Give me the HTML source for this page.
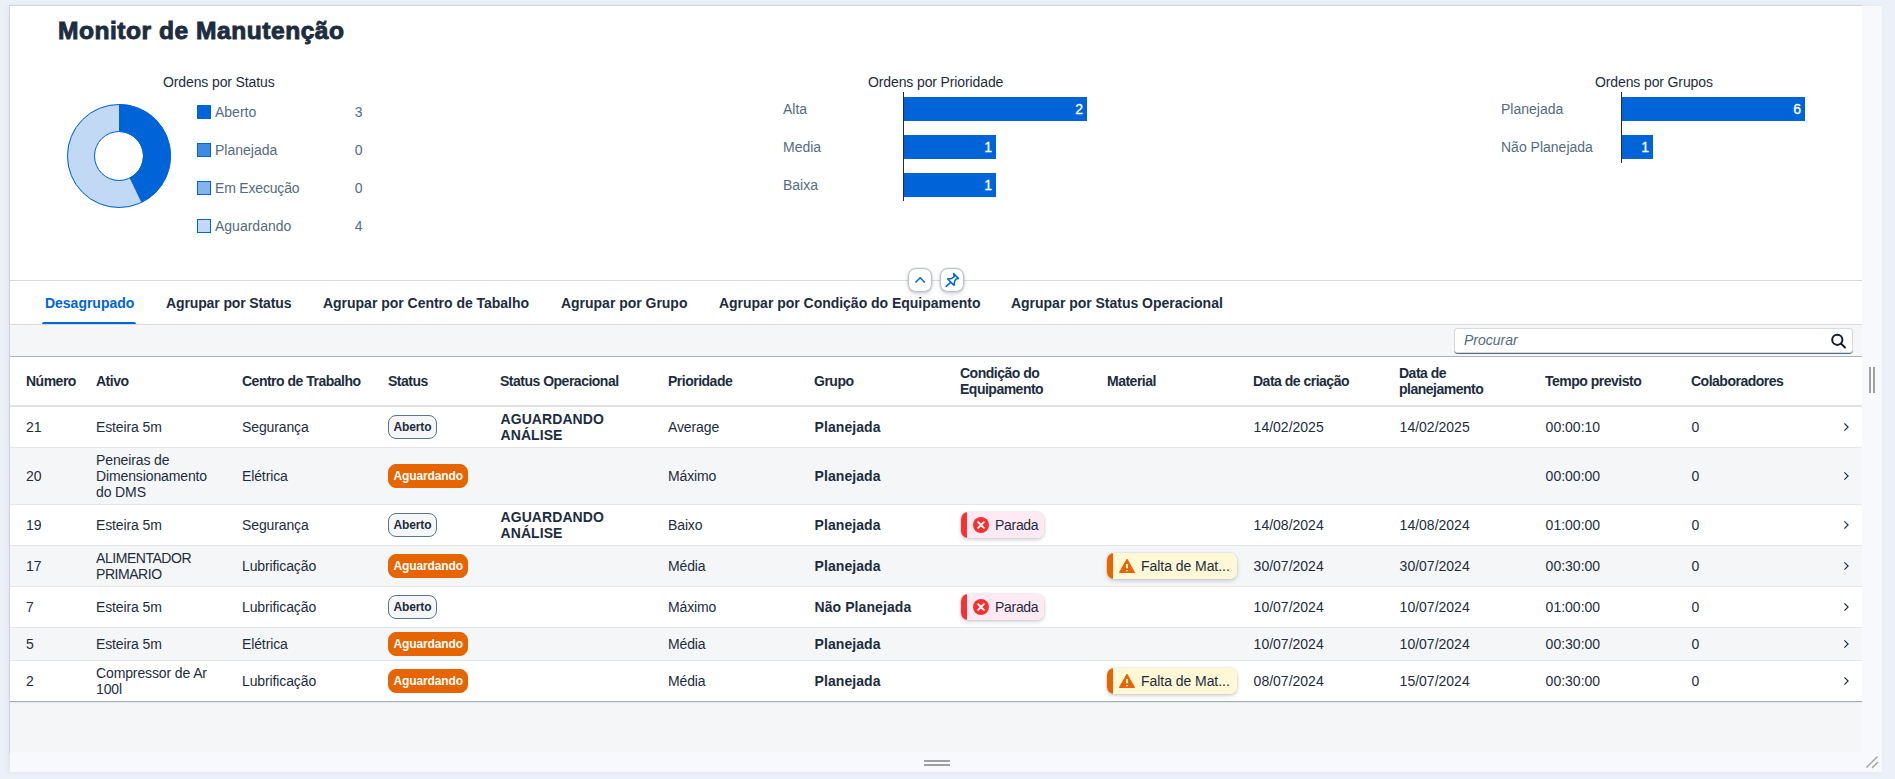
<!DOCTYPE html>
<html lang="pt-BR">
<head>
<meta charset="utf-8">
<title>Monitor de Manutenção</title>
<style>
*{box-sizing:border-box;margin:0;padding:0}
html,body{width:1895px;height:779px;overflow:hidden}
body{position:relative;background:#ecf0f8;font-family:"Liberation Sans",Arial,sans-serif;font-size:14px;color:#1d2d3e}
.abs{position:absolute}
#frame{left:10px;top:6px;width:1872px;height:766px;background:#f8f9fd;box-shadow:-2px 0 5px rgba(110,120,150,.10)}
#edgeT{left:9px;top:5px;width:1853px;height:1px;background:rgba(90,100,120,.16)}
#edgeL{left:9px;top:5px;width:1px;height:748px;background:rgba(90,100,120,.13)}
#page{left:10px;top:6px;width:1852px;height:746px;background:#fff;overflow:hidden}
#below{left:10px;top:702px;width:1852px;height:50px;background:#f5f6f7;border-top:1px solid #e4e7ea}
h1{position:absolute;left:58px;top:16px;font-size:23.5px;line-height:30px;font-weight:bold;color:#1d2d3e;white-space:nowrap;letter-spacing:.5px;-webkit-text-stroke:.9px #1d2d3e;transform-origin:0 50%;transform:scaleX(1.045)}
.ctitle{position:absolute;font-size:14px;line-height:16px;color:#1d2d3e;white-space:nowrap;letter-spacing:-.12px}
.lbl{position:absolute;font-size:14px;line-height:16px;color:#556b82;white-space:nowrap}
.bar{position:absolute;background:#0064d9;color:#fff;font-size:14px;line-height:24px;height:24px;text-align:right;padding-right:4px;-webkit-text-stroke:.3px #fff}
.axis{position:absolute;width:1px;background:#1d2d3e}
.sq{position:absolute;width:14px;height:14px;border:1px solid #0064d9}
/* header bottom line + buttons */
#hline{left:10px;top:280px;width:1852px;height:1px;background:#d9d9d9}
.hbtn{position:absolute;top:268px;width:24px;height:24px;border:1px solid #bcc3ca;border-radius:8px;background:#fff;box-shadow:0 0 2px rgba(34,53,72,.2),0 2px 4px rgba(34,53,72,.2)}
.hbtn svg{position:absolute;left:0;top:0}
/* tabs */
.tab{position:absolute;top:294px;font-size:14px;line-height:18px;font-weight:bold;color:#1d2d3e;white-space:nowrap;letter-spacing:-.02px}
.tab.sel{color:#0064d9}
#tabul{left:42px;top:322px;width:94px;height:3px;background:#0064d9;border-radius:2px 2px 0 0}
#tabline{left:10px;top:324px;width:1852px;height:1px;background:#d9d9d9}
/* toolbar */
#toolbar{left:10px;top:325px;width:1852px;height:31px;background:#f5f6f7}
#tbline{left:10px;top:356px;width:1852px;height:1px;background:#a8b3bd}
#search{left:1454px;top:328px;width:399px;height:26px;background:#fff;border-radius:4px;box-shadow:inset 0 0 0 1px rgba(85,107,129,.25);border-bottom:1px solid #556b81}
#search span{position:absolute;left:10px;top:4px;font-style:italic;font-size:14px;line-height:16px;color:#556b82}
/* table */
table{position:absolute;left:10px;top:357px;width:1852px;border-collapse:separate;border-spacing:0;table-layout:fixed}
th{height:50px;text-align:left;vertical-align:middle;font-weight:bold;font-size:14px;line-height:16px;padding:0 8px;color:#1d2d3e;border-bottom:2px solid #e3e3e3;letter-spacing:-.5px}
td{vertical-align:middle;font-size:14px;line-height:16px;padding:0 8px;color:#1d2d3e;letter-spacing:-.12px;border-bottom:1px solid #e5e5e5}
tr.alt td{background:#f5f6f7}
tr.last td{border-bottom:1px solid #a3afba}
th:first-child,td:first-child{padding-left:16px}
.b{font-weight:bold}
td.b{letter-spacing:.08px;padding-left:8.5px}
td.n{letter-spacing:0;padding-left:8.6px}
td.up{letter-spacing:-.45px}
.nav svg{display:block;margin:0 auto}
.badge{display:inline-block;height:24px;line-height:22px;border-radius:8px;font-size:12px;font-weight:bold;padding:0 4.5px;letter-spacing:-.12px;vertical-align:middle;white-space:nowrap}
.badge.open{border:1px solid #5b738b;background:#f5f6f7;color:#1d2d3e}
.badge.wait{border:1px solid #e76500;background:#e76500;color:#fff}
.pill{display:inline-block;position:relative;height:26px;line-height:26px;border-radius:7px;font-size:14px;white-space:nowrap;vertical-align:middle;overflow:hidden;box-shadow:0 0 2px rgba(34,53,72,.2),0 2px 4px rgba(34,53,72,.2)}
.pill.err{width:83px;margin-left:1px;background:linear-gradient(90deg,#f53232 6px,#ffeaf4 6px);padding-left:34px;letter-spacing:-.3px}
.pill.warn{width:130px;background:linear-gradient(90deg,#e76500 6px,#fff8d6 6px);padding-left:34px;letter-spacing:-.05px}
.pill svg{position:absolute;top:5px}
.nav{text-align:center}
</style>
</head>
<body>
<div id="frame" class="abs"></div>
<div id="edgeT" class="abs"></div>
<div id="edgeL" class="abs"></div>
<div id="page" class="abs"></div>
<div id="below" class="abs"></div>

<h1>Monitor de Manutenção</h1>

<!-- chart 1: donut -->
<div class="ctitle" style="left:163px;top:74px">Ordens por Status</div>
<svg class="abs" style="left:64px;top:101px" width="110" height="110" viewBox="0 0 110 110">
  <circle cx="55" cy="55" r="38" fill="none" stroke="#c2d9f6" stroke-width="28"/>
  <path d="M55 3 A52 52 0 0 1 77.56 101.85 L65.41 76.62 A24 24 0 0 0 55 31 Z" fill="#0064d9"/>
  <circle cx="55" cy="55" r="51.5" fill="none" stroke="#0064d9" stroke-width="1"/>
  <circle cx="55" cy="55" r="24.5" fill="none" stroke="#0064d9" stroke-width="1"/>
</svg>
<div class="sq" style="left:197px;top:105px;background:#0064d9"></div>
<div class="sq" style="left:197px;top:143px;background:#3f8be3"></div>
<div class="sq" style="left:197px;top:181px;background:#85b4ed"></div>
<div class="sq" style="left:197px;top:219px;background:#c2d9f6"></div>
<div class="lbl" style="left:215px;top:104px">Aberto</div>
<div class="lbl" style="left:215px;top:142px">Planejada</div>
<div class="lbl" style="left:215px;top:180px;letter-spacing:-.18px">Em Execução</div>
<div class="lbl" style="left:215px;top:218px">Aguardando</div>
<div class="lbl" style="left:354.7px;top:104px">3</div>
<div class="lbl" style="left:354.7px;top:142px">0</div>
<div class="lbl" style="left:354.7px;top:180px">0</div>
<div class="lbl" style="left:354.7px;top:218px">4</div>

<!-- chart 2: priority -->
<div class="ctitle" style="left:868px;top:74px">Ordens por Prioridade</div>
<div class="lbl" style="left:783px;top:101px">Alta</div>
<div class="lbl" style="left:783px;top:139px">Media</div>
<div class="lbl" style="left:783px;top:177px">Baixa</div>
<div class="axis" style="left:903px;top:92px;height:109px"></div>
<div class="bar" style="left:904px;top:97px;width:183px">2</div>
<div class="bar" style="left:904px;top:135px;width:92px">1</div>
<div class="bar" style="left:904px;top:173px;width:92px">1</div>

<!-- chart 3: groups -->
<div class="ctitle" style="left:1595px;top:74px">Ordens por Grupos</div>
<div class="lbl" style="left:1501px;top:101px">Planejada</div>
<div class="lbl" style="left:1501px;top:139px">Não Planejada</div>
<div class="axis" style="left:1621px;top:92px;height:71px"></div>
<div class="bar" style="left:1622px;top:97px;width:183px">6</div>
<div class="bar" style="left:1622px;top:135px;width:31px">1</div>

<!-- header line + buttons -->
<div id="hline" class="abs"></div>
<div class="hbtn" style="left:908px"><svg width="22" height="22" viewBox="0 0 22 22"><path d="M6.5 13.5 L11.2 8.8 L15.9 13.5" fill="none" stroke="#0064d9" stroke-width="1.5"/></svg></div>
<div class="hbtn" style="left:940px"><svg width="22" height="22" viewBox="0 0 22 22"><path d="M12.6 4.6 L17.4 9.4 L15.2 9.9 L13.6 12.4 L13 16.4 L6.6 10 L10.6 9.4 L13.1 7.8 Z M9.6 13.4 L5.2 17.4" fill="none" stroke="#0064d9" stroke-width="1.5" stroke-linejoin="round" stroke-linecap="round"/></svg></div>

<!-- tabs -->
<div class="tab sel" style="left:45px">Desagrupado</div>
<div class="tab" style="left:166px;letter-spacing:-.12px">Agrupar por Status</div>
<div class="tab" style="left:323px">Agrupar por Centro de Tabalho</div>
<div class="tab" style="left:561px">Agrupar por Grupo</div>
<div class="tab" style="left:719px">Agrupar por Condição do Equipamento</div>
<div class="tab" style="left:1011px">Agrupar por Status Operacional</div>
<div id="tabul" class="abs"></div>
<div id="tabline" class="abs"></div>

<!-- toolbar -->
<div id="toolbar" class="abs"></div>
<div id="tbline" class="abs"></div>
<div id="search" class="abs"><span>Procurar</span>
<svg class="abs" style="left:374px;top:3px" width="20" height="20" viewBox="0 0 20 20"><circle cx="9.3" cy="8.8" r="5.1" fill="none" stroke="#131e29" stroke-width="2"/><path d="M13 12.5 L17 16.5" stroke="#131e29" stroke-width="1.9" stroke-linecap="round"/></svg>
</div>

<!-- TABLE -->
<table>
<colgroup><col style="width:78px"><col style="width:146px"><col style="width:146px"><col style="width:112px"><col style="width:168px"><col style="width:146px"><col style="width:146px"><col style="width:147px"><col style="width:146px"><col style="width:146px"><col style="width:146px"><col style="width:146px"><col style="width:146px"><col style="width:33px"></colgroup>
<thead><tr><th>Número</th><th>Ativo</th><th>Centro de Trabalho</th><th>Status</th><th>Status Operacional</th><th>Prioridade</th><th>Grupo</th><th>Condição do Equipamento</th><th>Material</th><th>Data de criação</th><th>Data de planejamento</th><th>Tempo previsto</th><th>Colaboradores</th><th></th></tr></thead>
<tbody>
<tr class="" style="height:41px"><td>21</td><td>Esteira 5m</td><td>Segurança</td><td><span class="badge open">Aberto</span></td><td class="b so">AGUARDANDO ANÁLISE</td><td>Average</td><td class="b">Planejada</td><td></td><td></td><td class="n">14/02/2025</td><td class="n">14/02/2025</td><td class="n">00:00:10</td><td class="n">0</td><td class="nav"><svg width="8" height="12" viewBox="0 0 8 12"><path d="M2.4 2.3 L6.1 6 L2.4 9.7" fill="none" stroke="#1d2d3e" stroke-width="1.15"/></svg></td></tr>
<tr class="alt" style="height:57px"><td>20</td><td>Peneiras de Dimensionamento do DMS</td><td>Elétrica</td><td><span class="badge wait">Aguardando</span></td><td class="b so"></td><td>Máximo</td><td class="b">Planejada</td><td></td><td></td><td></td><td></td><td class="n">00:00:00</td><td class="n">0</td><td class="nav"><svg width="8" height="12" viewBox="0 0 8 12"><path d="M2.4 2.3 L6.1 6 L2.4 9.7" fill="none" stroke="#1d2d3e" stroke-width="1.15"/></svg></td></tr>
<tr class="" style="height:41px"><td>19</td><td>Esteira 5m</td><td>Segurança</td><td><span class="badge open">Aberto</span></td><td class="b so">AGUARDANDO ANÁLISE</td><td>Baixo</td><td class="b">Planejada</td><td><span class="pill err"><svg style="left:12px" width="16" height="16" viewBox="0 0 16 16"><circle cx="8" cy="8" r="8" fill="#f53232"/><path d="M5.2 5.2 L10.8 10.8 M10.8 5.2 L5.2 10.8" stroke="#fff" stroke-width="1.9" stroke-linecap="round"/></svg>Parada</span></td><td></td><td class="n">14/08/2024</td><td class="n">14/08/2024</td><td class="n">01:00:00</td><td class="n">0</td><td class="nav"><svg width="8" height="12" viewBox="0 0 8 12"><path d="M2.4 2.3 L6.1 6 L2.4 9.7" fill="none" stroke="#1d2d3e" stroke-width="1.15"/></svg></td></tr>
<tr class="alt" style="height:41px"><td>17</td><td class="up">ALIMENTADOR PRIMARIO</td><td>Lubrificação</td><td><span class="badge wait">Aguardando</span></td><td class="b so"></td><td>Média</td><td class="b">Planejada</td><td></td><td><span class="pill warn"><svg style="left:12px" width="16" height="16" viewBox="0 0 16 16"><path d="M8 1.6 L15.2 14.4 L0.8 14.4 Z" fill="#e76500" stroke="#e76500" stroke-width="1.4" stroke-linejoin="round"/><path d="M8 6 L8 10.2 M8 12 L8 13.2" stroke="#fff8d6" stroke-width="2.1"/></svg>Falta de Mat...</span></td><td class="n">30/07/2024</td><td class="n">30/07/2024</td><td class="n">00:30:00</td><td class="n">0</td><td class="nav"><svg width="8" height="12" viewBox="0 0 8 12"><path d="M2.4 2.3 L6.1 6 L2.4 9.7" fill="none" stroke="#1d2d3e" stroke-width="1.15"/></svg></td></tr>
<tr class="" style="height:41px"><td>7</td><td>Esteira 5m</td><td>Lubrificação</td><td><span class="badge open">Aberto</span></td><td class="b so"></td><td>Máximo</td><td class="b">Não Planejada</td><td><span class="pill err"><svg style="left:12px" width="16" height="16" viewBox="0 0 16 16"><circle cx="8" cy="8" r="8" fill="#f53232"/><path d="M5.2 5.2 L10.8 10.8 M10.8 5.2 L5.2 10.8" stroke="#fff" stroke-width="1.9" stroke-linecap="round"/></svg>Parada</span></td><td></td><td class="n">10/07/2024</td><td class="n">10/07/2024</td><td class="n">01:00:00</td><td class="n">0</td><td class="nav"><svg width="8" height="12" viewBox="0 0 8 12"><path d="M2.4 2.3 L6.1 6 L2.4 9.7" fill="none" stroke="#1d2d3e" stroke-width="1.15"/></svg></td></tr>
<tr class="alt" style="height:33px"><td>5</td><td>Esteira 5m</td><td>Elétrica</td><td><span class="badge wait">Aguardando</span></td><td class="b so"></td><td>Média</td><td class="b">Planejada</td><td></td><td></td><td class="n">10/07/2024</td><td class="n">10/07/2024</td><td class="n">00:30:00</td><td class="n">0</td><td class="nav"><svg width="8" height="12" viewBox="0 0 8 12"><path d="M2.4 2.3 L6.1 6 L2.4 9.7" fill="none" stroke="#1d2d3e" stroke-width="1.15"/></svg></td></tr>
<tr class="last" style="height:41px"><td>2</td><td>Compressor de Ar 100l</td><td>Lubrificação</td><td><span class="badge wait">Aguardando</span></td><td class="b so"></td><td>Média</td><td class="b">Planejada</td><td></td><td><span class="pill warn"><svg style="left:12px" width="16" height="16" viewBox="0 0 16 16"><path d="M8 1.6 L15.2 14.4 L0.8 14.4 Z" fill="#e76500" stroke="#e76500" stroke-width="1.4" stroke-linejoin="round"/><path d="M8 6 L8 10.2 M8 12 L8 13.2" stroke="#fff8d6" stroke-width="2.1"/></svg>Falta de Mat...</span></td><td class="n">08/07/2024</td><td class="n">15/07/2024</td><td class="n">00:30:00</td><td class="n">0</td><td class="nav"><svg width="8" height="12" viewBox="0 0 8 12"><path d="M2.4 2.3 L6.1 6 L2.4 9.7" fill="none" stroke="#1d2d3e" stroke-width="1.15"/></svg></td></tr>
</tbody>
</table>

<!-- resize handles -->
<div class="abs" style="left:924px;top:760px;width:26px;height:2px;background:#a0a0a0"></div>
<div class="abs" style="left:924px;top:764px;width:26px;height:2px;background:#a0a0a0"></div>
<div class="abs" style="left:1869px;top:367px;width:2px;height:26px;background:#a0a0a0"></div>
<div class="abs" style="left:1873px;top:367px;width:2px;height:26px;background:#a0a0a0"></div>
<svg class="abs" style="left:1864px;top:754px" width="16" height="16" viewBox="0 0 16 16"><path d="M2.5 13.5 L13.5 2.5 M8 14 L14 8" stroke="#a0a0a0" stroke-width="1.4" fill="none"/></svg>
</body>
</html>
